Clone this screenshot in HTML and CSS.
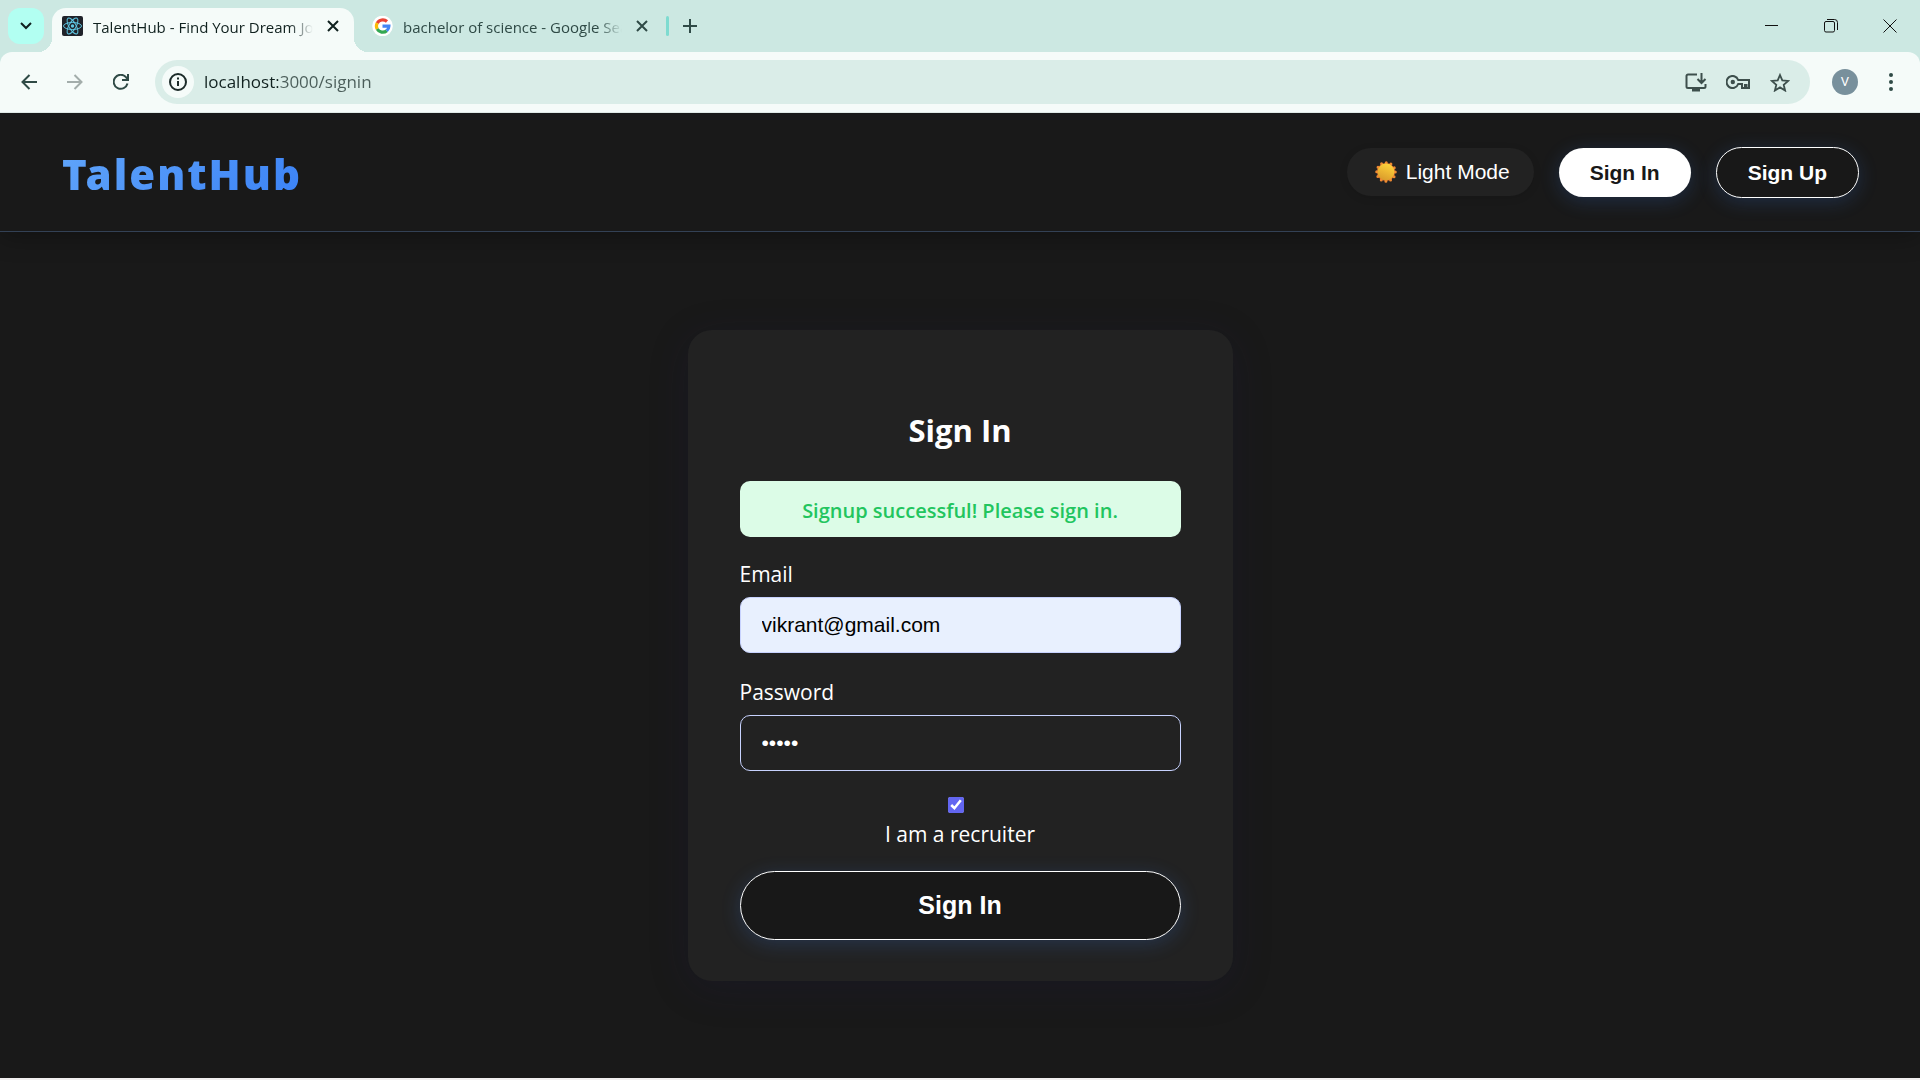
FILE: index.html
```html
<!DOCTYPE html>
<html lang="en">
<head>
<meta charset="utf-8">
<meta name="viewport" content="width=device-width, initial-scale=1">
<title>TalentHub - Find Your Dream Job</title>
<link rel="stylesheet" href="styles.css">
</head>
<body>
<div class="browser">
  <div class="tabstrip">
    <button class="tab-search" type="button" aria-label="Search tabs">
      <svg width="12" height="8" viewBox="0 0 12 8" fill="none" stroke="#10211f" stroke-width="2"><path d="M1 1l5 5 5-5"/></svg>
    </button>
    <div class="tab tab-active">
      <svg class="favicon" width="21" height="20" viewBox="0 0 21 20" fill="none" stroke="#5fc7e3" stroke-width="1">
        <rect width="21" height="20" rx="2" fill="#20232a" stroke="none"/>
        <ellipse cx="10.500" cy="10" rx="9" ry="3.500"/>
        <ellipse cx="10.500" cy="10" rx="9" ry="3.500" transform="rotate(60 10.500 10)"/>
        <ellipse cx="10.500" cy="10" rx="9" ry="3.500" transform="rotate(120 10.500 10)"/>
        <circle cx="10.500" cy="10" r="1.700" fill="#5fc7e3" stroke="none"/>
      </svg>
      <span class="tab-title">TalentHub - Find Your Dream Job</span>
      <button class="icon-btn" type="button" aria-label="Close tab">
        <svg width="12" height="12" viewBox="0 0 12 12" stroke="#10211f" stroke-width="2"><path d="M1 1l10 10M11 1L1 11"/></svg>
      </button>
    </div>
    <div class="tab">
      <svg class="favicon" width="21" height="20" viewBox="0 0 21 20">
        <circle cx="10.500" cy="10" r="10.300" fill="#fff"/>
        <g fill="none" stroke-width="3.200">
          <path d="M5.200 7.200A6.300 6.300 0 0 1 15 5.500" stroke="#ea4335"/>
          <path d="M5.200 13A6.300 6.300 0 0 1 5.200 7" stroke="#fbbc05"/>
          <path d="M14.800 14.700A6.300 6.300 0 0 1 5.200 12.900" stroke="#34a853"/>
          <path d="M10.500 10.200h6.400a6.300 6.300 0 0 1-2.200 4.600" stroke="#4285f4"/>
        </g>
      </svg>
      <span class="tab-title">bachelor of science - Google Search</span>
      <button class="icon-btn" type="button" aria-label="Close tab">
        <svg width="12" height="12" viewBox="0 0 12 12" stroke="#2f4a46" stroke-width="2"><path d="M1 1l10 10M11 1L1 11"/></svg>
      </button>
    </div>
    <span class="tab-divider"></span>
    <button class="icon-btn" type="button" aria-label="New tab">
      <svg width="14" height="14" viewBox="0 0 14 14" stroke="#2f4a46" stroke-width="2"><path d="M7 0v14M0 7h14"/></svg>
    </button>
    <div class="window-controls">
      <button class="icon-btn" type="button" aria-label="Minimize">
        <svg width="14" height="14" viewBox="0 0 14 14" stroke="#111"><path d="M0 6.500h13"/></svg>
      </button>
      <button class="icon-btn" type="button" aria-label="Restore">
        <svg width="14" height="14" viewBox="0 0 14 14" fill="none" stroke="#111"><rect x=".5" y="2.500" width="10" height="10.500" rx="1.500"/><path d="M3 .5h7.500a3 3 0 0 1 3 3V11"/></svg>
      </button>
      <button class="icon-btn" type="button" aria-label="Close">
        <svg width="14" height="14" viewBox="0 0 14 14" stroke="#111"><path d="M.5.500l13 13M13.500.500l-13 13"/></svg>
      </button>
    </div>
  </div>

  <div class="toolbar">
    <button class="icon-btn" type="button" aria-label="Back">
      <svg width="16" height="16" viewBox="0 0 16 16" fill="none" stroke="#2f4a46" stroke-width="2"><path d="M16 8H2M8.500 1L1.500 8l7 7"/></svg>
    </button>
    <button class="icon-btn" type="button" aria-label="Forward" disabled>
      <svg width="16" height="16" viewBox="0 0 16 16" fill="none" stroke="#a3adab" stroke-width="2"><path d="M0 8h14M7.500 1l7 7-7 7"/></svg>
    </button>
    <button class="icon-btn" type="button" aria-label="Reload">
      <svg width="16" height="16" viewBox="0 0 16 16" fill="none" stroke="#2f4a46" stroke-width="2"><path d="M14.500 9.500A7 7 0 1 1 13 3.200l2 2M15 0v6H9"/></svg>
    </button>
    <div class="omnibox">
      <button class="site-info" type="button" aria-label="Site information">
        <svg width="18" height="18" viewBox="0 0 18 18" fill="none" stroke="#1c2b29" stroke-width="2"><circle cx="9" cy="9" r="8"/><path d="M9 8v5M9 4.500v2"/></svg>
      </button>
      <input class="url" type="text" aria-label="Address" value="localhost:3000/signin">
      <button class="icon-btn" type="button" aria-label="Install app">
        <svg width="22" height="19" viewBox="0 0 22 19" fill="none" stroke="#3d4f4c" stroke-width="2"><path d="M12 1.500H3a1.500 1.500 0 0 0-1.500 1.500v10.500A1.500 1.500 0 0 0 3 15h16a1.500 1.500 0 0 0 1.500-1.500V11M16.500 0v9.500M12.500 6l4 4 4-4"/><path d="M7 17h8" stroke-width="3"/></svg>
      </button>
      <button class="icon-btn" type="button" aria-label="Passwords">
        <svg width="24" height="14" viewBox="0 0 24 14" fill="none" stroke="#3d4f4c" stroke-width="2"><path d="M12.200 5A6 6 0 1 0 12.200 9H16v4h3v-3h1.500v3H23V5z"/><circle cx="6.800" cy="7" r="2.200" fill="#3d4f4c" stroke="none"/></svg>
      </button>
      <button class="icon-btn" type="button" aria-label="Bookmark">
        <svg width="20" height="19" viewBox="0 0 20 19" fill="none" stroke="#3d4f4c" stroke-width="1.800"><path d="M10 2l2.300 5.400 5.900.5-4.500 3.900 1.400 5.700L10 14.400l-5.100 3.100 1.400-5.700-4.500-3.900 5.900-.5z"/></svg>
      </button>
    </div>
    <button class="avatar" type="button" aria-label="Profile">V</button>
    <button class="icon-btn menu-btn" type="button" aria-label="Menu">
      <svg width="4" height="18" viewBox="0 0 4 18" fill="#2f4a46"><circle cx="2" cy="2" r="2"/><circle cx="2" cy="9" r="2"/><circle cx="2" cy="16" r="2"/></svg>
    </button>
  </div>
</div>

<div class="app">
  <header class="header">
    <a class="logo" href="#">TalentHub</a>
    <nav class="nav">
      <button class="theme-btn" type="button">
        <svg width="22" height="22" viewBox="0 0 22 22">
          <defs><linearGradient id="sun" x1=".7" y1="0" x2=".3" y2="1"><stop offset="0" stop-color="#ffd43b"/><stop offset="1" stop-color="#d99a2b"/></linearGradient></defs>
          <circle cx="11" cy="11" r="9" fill="#e8722e"/>
          <circle cx="11" cy="11" r="9.300" fill="none" stroke="#f08a32" stroke-width="3" stroke-linecap="round" stroke-dasharray="0 4.869"/>
          <circle cx="11" cy="11" r="8.400" fill="url(#sun)"/>
        </svg>
        Light Mode
      </button>
      <button class="nav-btn nav-btn-solid" type="button">Sign In</button>
      <button class="nav-btn" type="button">Sign Up</button>
    </nav>
  </header>

  <main class="main">
    <form class="card">
      <h1 class="card-title">Sign In</h1>
      <p class="alert" role="status">Signup successful! Please sign in.</p>
      <label class="label" for="email">Email</label>
      <input class="field field-filled" id="email" type="email" value="vikrant@gmail.com">
      <label class="label" for="password">Password</label>
      <input class="field" id="password" type="password" value="admin">
      <div class="recruiter">
        <input class="checkbox" id="recruiter" type="checkbox" checked>
        <label for="recruiter">I am a recruiter</label>
      </div>
      <button class="submit" type="button">Sign In</button>
    </form>
  </main>
</div>
</body>
</html>
```
FILE: styles.css
```css
* { box-sizing: border-box; }

body {
  margin: 0;
  min-height: 100vh;
  display: flex;
  flex-direction: column;
  padding-bottom: 2px;
  background: #f2f0f0;
  font-family: "Open Sans", "Noto Sans", sans-serif;
}

button { margin: 0; cursor: pointer; }

svg { display: block; flex: none; }

/* Browser chrome */
.browser {
  position: relative;
  z-index: 1;
  background: #cce8e2;
}

.tabstrip {
  display: flex;
  align-items: center;
  height: 52px;
  padding: 8px 16px 0 8px;
}

.tab-search {
  display: flex;
  align-items: center;
  justify-content: center;
  align-self: flex-start;
  width: 36px;
  height: 36px;
  margin-right: 8px;
  padding: 0;
  border: 0;
  border-radius: 12px;
  background: #b2fff2;
}

.icon-btn {
  display: flex;
  align-items: center;
  justify-content: center;
  flex: none;
  width: 24px;
  height: 24px;
  padding: 0;
  border: 0;
  background: none;
}

.tab {
  position: relative;
  display: flex;
  align-items: center;
  width: 302px;
  height: 44px;
  padding: 0 2px 8px 18px;
  color: #2f4a46;
  font-size: 15px;
}

.tab-active {
  padding: 0 9px 8px 10px;
  border-radius: 14px 14px 0 0;
  background: #f5fbf9;
  color: #10211f;
}

/* Concave feet that join the active tab to the toolbar */
.tab-active::before,
.tab-active::after {
  content: "";
  position: absolute;
  bottom: 0;
  width: 14px;
  height: 14px;
}

.tab-active::before {
  left: -14px;
  background: radial-gradient(circle at 0 0, transparent 14px, #f5fbf9 14px);
}

.tab-active::after {
  right: -14px;
  background: radial-gradient(circle at 100% 0, transparent 14px, #f5fbf9 14px);
}

.favicon { margin-right: 10px; }

.tab-title {
  flex: 1;
  overflow: hidden;
  margin-right: 8px;
  padding-top: 2px;
  line-height: 20px;
  white-space: nowrap;
  mask-image: linear-gradient(90deg, #000 calc(100% - 24px), transparent);
}

.tab-divider {
  width: 3px;
  height: 20px;
  margin: 0 9px 8px 10px;
  border-radius: 2px;
  background: #7edbd0;
}

.tab-divider + .icon-btn { margin-bottom: 8px; }

.window-controls {
  display: flex;
  gap: 35px;
  margin: 0 2px 8px auto;
}

.toolbar {
  display: flex;
  align-items: center;
  gap: 22px;
  height: 61px;
  padding: 0 18px 0 17px;
  border-radius: 12px 12px 0 0;
  border-bottom: 1px solid #dfe9e6;
  background: #f5fbf9;
}

.omnibox {
  flex: 1;
  display: flex;
  align-items: center;
  gap: 18px;
  height: 44px;
  padding: 0 18px 0 7px;
  border-radius: 22px;
  background: #daede8;
}

.site-info {
  display: flex;
  align-items: center;
  justify-content: center;
  width: 32px;
  height: 32px;
  padding: 0;
  border: 0;
  border-radius: 50%;
  background: #f5fbf9;
}

.url {
  flex: 1;
  min-width: 0;
  height: 28px;
  margin-left: -8px;
  padding: 0;
  border: 0;
  outline: 0;
  background: linear-gradient(90deg, #10211f 74px, #4a5d59 74px);
  background-clip: text;
  color: transparent;
  font: 17px/28px "Open Sans", "Noto Sans", sans-serif;
}

.avatar {
  width: 26px;
  height: 26px;
  padding: 0;
  border: 0;
  border-radius: 50%;
  background: #78909c;
  color: #fff;
  font: 13px/26px Roboto, sans-serif;
}

.menu-btn { width: 22px; }

/* Application */
.app {
  flex: 1;
  display: flex;
  flex-direction: column;
  background: #191919;
  color: #fff;
}

.header {
  display: flex;
  align-items: center;
  justify-content: space-between;
  min-height: 119px;
  padding: 0 61px 0 62px;
  border-bottom: 1px solid #334155;
  box-shadow: 0 4px 24px rgba(0, 0, 0, 0.3);
}

.logo {
  padding-top: 4px;
  background: linear-gradient(135deg, #60a5fa, #3b82f6);
  background-clip: text;
  color: transparent;
  font: 900 42px/56px "Noto Sans", "Open Sans", sans-serif;
  letter-spacing: 2px;
  text-decoration: none;
}

.nav {
  display: flex;
  align-items: center;
  gap: 25px;
}

.theme-btn {
  display: flex;
  align-items: center;
  gap: 9px;
  height: 48px;
  padding: 0 24px 0 28px;
  border: 0;
  border-radius: 24px;
  background: #222;
  box-shadow: 0 2px 8px rgba(0, 0, 0, 0.1);
  color: #fff;
  font: 21px/24px "Liberation Sans", Arial, sans-serif;
}

.nav-btn {
  padding: 12px 31px;
  border: 1px solid #fff;
  border-radius: 26px;
  background: #181818;
  box-shadow: 0 4px 20px rgba(59, 130, 246, 0.2);
  color: #fff;
  font: bold 21px/25px "Liberation Sans", Arial, sans-serif;
}

.nav-btn-solid {
  border: 0;
  background: #fff;
  color: #181818;
}

.main {
  flex: 1;
  display: flex;
  align-items: center;
  justify-content: center;
  padding: 40px 16px;
}

.card {
  display: flex;
  flex-direction: column;
  width: 100%;
  max-width: 545px;
  padding: 76px 52px 41px;
  border-radius: 24px;
  background: #222;
  box-shadow: 0 8px 40px rgba(30, 27, 75, 0.2);
  font-size: 21px;
}

.card-title {
  margin: 0 0 27px;
  font-size: 31px;
  line-height: 48px;
  text-align: center;
}

.alert {
  margin: 0 0 22px;
  padding: 16px 16px 12px;
  border-radius: 10px;
  background: #dcfce7;
  color: #22c55e;
  font-size: 20px;
  font-weight: 600;
  line-height: 28px;
  text-align: center;
}

.label {
  margin-bottom: 8px;
  line-height: 30px;
}

.field {
  height: 56px;
  margin-bottom: 24px;
  padding: 0 21px;
  border: 1px solid #c7d2fe;
  border-radius: 10px;
  outline: 0;
  background: #222;
  color: #fff;
  font: 21px/24px "Liberation Sans", Arial, sans-serif;
}

.field-filled {
  background: #e8f0fe;
  color: #000;
}

.recruiter {
  display: flex;
  flex-direction: column;
  align-items: center;
  gap: 6px;
  margin: 2px 0 22px;
  line-height: 30px;
}

.checkbox {
  width: 16px;
  height: 16px;
  margin: 0 8px 0 0;
  accent-color: #6366f1;
}

.submit {
  height: 69px;
  border: 1px solid #fff;
  border-radius: 35px;
  background: #181818;
  box-shadow: 0 4px 20px rgba(59, 130, 246, 0.2);
  color: #fff;
  font: bold 25px/30px "Liberation Sans", Arial, sans-serif;
}
```
